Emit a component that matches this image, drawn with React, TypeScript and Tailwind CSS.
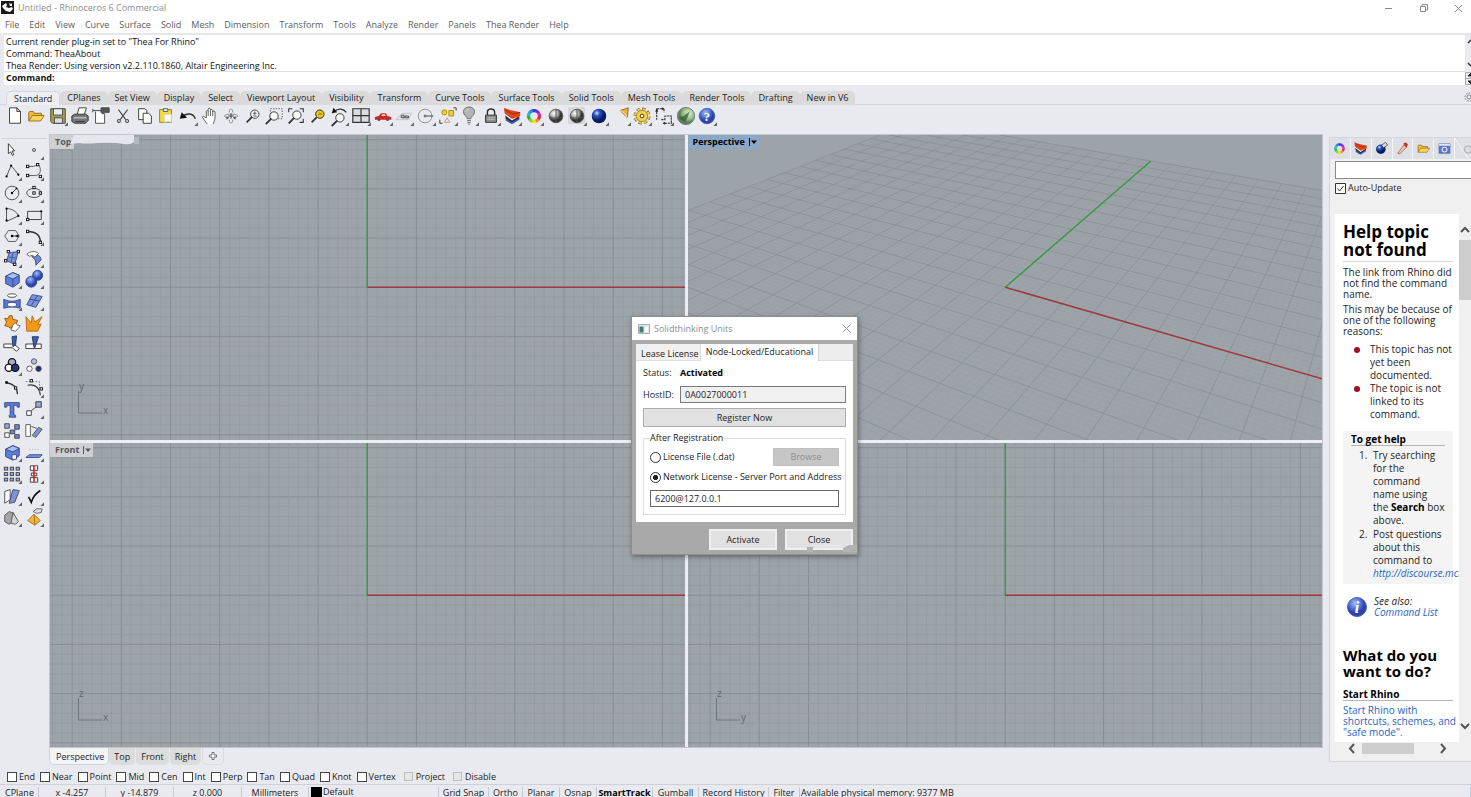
import React, { useState } from 'react';

const MENUS = ['File', 'Edit', 'View', 'Curve', 'Surface', 'Solid', 'Mesh', 'Dimension', 'Transform', 'Tools', 'Analyze', 'Render', 'Panels', 'Thea Render', 'Help'];

const TOOL_TABS = ['Standard', 'CPlanes', 'Set View', 'Display', 'Select', 'Viewport Layout', 'Visibility', 'Transform', 'Curve Tools', 'Surface Tools', 'Solid Tools', 'Mesh Tools', 'Render Tools', 'Drafting', 'New in V6'];

const OSNAPS = ['End', 'Near', 'Point', 'Mid', 'Cen', 'Int', 'Perp', 'Tan', 'Quad', 'Knot', 'Vertex'];

interface Tool {
  name: string;
  art: React.ReactNode;
  more?: boolean;
}

const ColorWheel = ({ r = 5 }: { r?: number }) => (
  <g fill="none" strokeWidth="3.6">
    {['#e8262a', '#f08a1e', '#f6e11c', '#8fd02a', '#27b34a', '#22c4c0', '#2a8be0', '#2b3fd0', '#7a2bd0', '#d02bb8'].map((c, i) => (
      <circle key={c} cx="11" cy="11" r={r} stroke={c} pathLength="10" strokeDasharray="1.1 8.9" strokeDashoffset={-i} />
    ))}
  </g>
);

const Node = ({ x, y }: { x: number; y: number }) => (
  <rect x={x - 1.3} y={y - 1.3} width="2.6" height="2.6" fill="#fff" stroke="#111" strokeWidth="1" />
);

const Shaded = (
  <g>
    <path d="M3 7l8 6 8-4v5l-8 5-7-5z" fill="#2d2d33" />
    <path d="M3 8l8 6 8-5v2l-8 5-8-6z" fill="#f4f4f4" />
    <path d="M2 2l6 2 12 3v4l-8 3-9-6z" fill="#e0451c" />
    <path d="M3 4l9 5 8-2" fill="none" stroke="#8c1c08" strokeWidth=".8" />
    <path d="M4 14l7 4 8-5v2l-8 5-7-4z" fill="#3b55b5" />
  </g>
);

const Magnifier = (
  <g fill="none" stroke="#333">
    <circle cx="13" cy="9" r="4.6" fill="#f7f7fa" />
    <path d="M10 12l-6 6" strokeWidth="2" />
  </g>
);

const Folder = (
  <g stroke="#7a5206" strokeWidth=".8">
    <path d="M3 16V7l1-1h4l1 2h8v3" fill="#f2b93c" />
    <path d="M3 16.500l4-6h13l-4 6z" fill="#fbd65c" />
  </g>
);

const STANDARD: Tool[] = [
  { name: 'New', art: <path d="M5 2h8l4 4v13H5zM13 2v4h4" fill="#fff" stroke="#333" /> },
  { name: 'Open', art: Folder },
  { name: 'Save', more: true, art: <g stroke="#444"><path d="M3 3h16v16H5l-2-2z" fill="#a3a351" /><path d="M6 3h10v7H6z" fill="#eceef5" /><path d="M7 13h9v6H7z" fill="#ddd" /></g> },
  { name: 'Print', art: <g stroke="#333"><path d="M2 11l3-2h12l3 2v5l-3 3H5l-3-2z" fill="#777" /><path d="M8 9l2-7h8l-2 7z" fill="#fff" /><path d="M4 13h14" stroke="#e8e8e8" /><path d="M6 17h10" /></g> },
  { name: 'Document Properties', art: <g stroke="#444" fill="none"><path d="M5 6v13h10V8" fill="#fff" /><path d="M2 5h9" /><path d="M11 2h9v5h-5l-2 2-2-2z" fill="#555" /><path d="M2 3v4" /></g> },
  { name: 'Cut', art: <g stroke="#444" fill="none" strokeWidth="1.200"><path d="M6 4l8 11M16 4L8 15" /><circle cx="6.500" cy="16.500" r="1.600" /><circle cx="15.500" cy="16.500" r="1.600" /></g> },
  { name: 'Copy', art: <g stroke="#333" fill="#fff"><path d="M4 3h7l2 2v10H4z" /><path d="M9 8h6l3 3v8H9z" /></g> },
  { name: 'Paste', art: <g stroke="#8a7a20"><path d="M4 4h13v14H4z" fill="#f5dd3e" /><path d="M8 3h5v3H8z" fill="#eee" stroke="#555" /><path d="M9 9h8v9l-3-1-5 1z" fill="#fffbe0" stroke="#ccc" /></g> },
  { name: 'Undo', more: true, art: <g><path d="M5 12c4-5 12-4 14 2" fill="none" stroke="#333" strokeWidth="1.600" /><path d="M2 14l2-7 6 6z" fill="#111" /></g> },
  { name: 'Pan', art: <path d="M8 20l-5-7c-1-2 1-2 2-1l2 1V6c0-1.500 2-1.500 2 0V3.500c0-1.500 2.500-1.500 2.500 0V5c0-1.500 2.500-1.500 2.500 0v1.500c0-1.500 2.500-1.300 2.500 0V14l-2 6M9 6v5M11.500 5v6M14 6v5" fill="#fff" stroke="#555" /> },
  { name: 'Rotate View', art: <g fill="none" stroke="#888"><path d="M7 13c-5-1-5-4 4-4s9 3 4 4M9 7c0-5 4-5 4 0M9 15c0 5 4 5 4 0" /><path d="M8 11h6M11 8v6" stroke="#333" /><path d="M6 11l3 2-3 2zM16 11v4l-3-2z" fill="#555" stroke="none" /></g> },
  { name: 'Zoom Dynamic', art: <g>{Magnifier}<path d="M11 8h4M13 6v4M11 11h4" stroke="#333" strokeWidth=".8" /></g> },
  { name: 'Zoom Window', art: <g><path d="M7 3h13v11H7z" fill="none" stroke="#555" strokeDasharray="1.500 1.500" /><g transform="translate(-2 2)">{Magnifier}</g></g> },
  { name: 'Zoom Extents', art: <g><g transform="translate(-1 1)">{Magnifier}</g><path d="M3 7V3h4M15 3h4v4M19 14v4h-4" fill="none" stroke="#333" strokeWidth="1.200" /></g> },
  { name: 'Zoom Selected', art: <g>{Magnifier}<circle cx="13" cy="9" r="4.400" fill="#f2ce22" stroke="#6a5a10" /><path d="M11 10l4-2M12 7l3 3" stroke="#8a6d00" /></g> },
  { name: 'Undo View', more: true, art: <g><g transform="translate(-1 4)">{Magnifier}</g><path d="M6 6c4-4 10-3 13 1" fill="none" stroke="#333" strokeWidth="1.400" /><path d="M3 8l2-6 4 5z" fill="#111" /></g> },
  { name: 'Four Viewports', more: true, art: <g stroke="#333" fill="none"><path d="M2 3h18v15H2z" fill="#dcdde2" strokeWidth="1.300" /><path d="M2 10.500h18M11 3v15" strokeWidth="1.300" /></g> },
  { name: 'Car', more: true, art: <g><path d="M2 12l4-1 3-3h5l2 3 4 1v3H2z" fill="#d8261c" /><path d="M9 11l1-2h3l1 2z" fill="#f6d5d2" /><circle cx="6.500" cy="15" r="1.600" fill="#555" /><circle cx="16" cy="15" r="1.600" fill="#555" /></g> },
  { name: 'Construction Plane', more: true, art: <g stroke="#c2c2c6" fill="none"><path d="M2 15l7-7h10l-3 7z" /><path d="M5 12h12M8 10l4 5M13 9l2 6" /><path d="M8 10h3v3H8zM12 11h4v2h-4z" stroke="#444" /></g> },
  { name: 'Radius', more: true, art: <g fill="none" stroke="#888"><circle cx="10" cy="11" r="7.500" /><path d="M10 11h9" stroke="#333" /><path d="M9 10h2v2H9z" fill="#333" /></g> },
  { name: 'Select', more: true, art: <g><circle cx="7" cy="7" r="2.800" fill="#f3cf31" stroke="#a98400" /><path d="M12 5h5v6h-5z" fill="#f3cf31" stroke="#a98400" /><path d="M7 18l3-5 3 5z" fill="none" stroke="#c9928c" /><path d="M17 2h3v3M2 15v4h3" fill="none" stroke="#333" /></g> },
  { name: 'Hide', more: true, art: <g stroke="#666"><path d="M9 14c0-3-4-3-4-8a6 5 0 0112 0c0 5-4 5-4 8z" fill="#b5b5b5" /><path d="M9 16h4M9 18h4M10 20h2" /><path d="M8 6c1-2 3-2 3-2" stroke="#fff" /></g> },
  { name: 'Lock', more: true, art: <g stroke="#333"><path d="M7 10V7c0-5 8-5 8 0v3" fill="none" strokeWidth="1.600" /><path d="M5 10h12v8H5z" fill="#888" /><path d="M7 13h8M7 15h8" stroke="#c5c5c5" /></g> },
  { name: 'Shade', more: true, art: Shaded },
  { name: 'Layers', more: true, art: <ColorWheel r={6} /> },
  { name: 'Render', art: <g><circle cx="11" cy="11" r="7.500" fill="url(#grey)" stroke="#555" /><path d="M4 12c5 2 9 2 14 0M11 4v14" stroke="#555" fill="none" /></g> },
  { name: 'Render Preview', more: true, art: <g><path d="M2 2h17v17H2z" fill="#dcdce0" stroke="#ccc" /><circle cx="11" cy="11" r="7.500" fill="url(#grey)" stroke="#555" /><path d="M4 12c5 2 9 2 14 0M11 4v14" stroke="#555" fill="none" /></g> },
  { name: 'Environment', more: true, art: <circle cx="11" cy="11" r="8" fill="url(#navy)" /> },
  { name: 'Spotlight', more: true, art: <g><path d="M10 5l9-3-1 11z" fill="#f0b03a" stroke="#6a5430" strokeWidth=".8" /><path d="M10 5c3 1 6 4 8 8" stroke="#fff2a0" fill="none" /></g> },
  { name: 'Options', more: true, art: <g><circle cx="11" cy="11" r="7.500" fill="none" stroke="#6a5a20" strokeWidth="3.600" strokeDasharray="3.600 2.300" /><circle cx="11" cy="11" r="7.200" fill="none" stroke="#f1cf52" strokeWidth="3" strokeDasharray="3 2.650" /><circle cx="11" cy="11" r="6.200" fill="#f1cf52" stroke="#6a5a20" strokeWidth=".6" /><circle cx="11" cy="11" r="2" fill="#fff" stroke="#3a3010" /></g> },
  { name: 'Dimension', more: true, art: <g stroke="#333" fill="none"><path d="M3 3v12M3 3h8M11 3v4M8 15h4v-4h7v8M12 19h8" strokeDasharray="2.500 .8" strokeWidth="1.200" /><path d="M2 6l1-3 1 3zM9 2l2 1-2 1zM12 18v2l-2-1z" fill="#111" /></g> },
  { name: 'Thea', art: <g><circle cx="11" cy="11" r="9.500" fill="url(#green)" stroke="#777" /><path d="M3 13l5-2 7-5-2 6-3 6z" fill="#3c5b38" opacity=".75" /></g> },
  { name: 'Help Topics', more: true, art: <g><circle cx="11" cy="11" r="8.500" fill="url(#blue)" stroke="#4a60b8" /><text x="11" y="16" textAnchor="middle" fontSize="14" fontWeight="bold" fontFamily="Liberation Serif, serif" fill="#fff">?</text></g> },
];

const box = 'M4 8l8-4 7 3v8l-7 5-8-4z';

const SIDE: Tool[] = [
  { name: 'Pointer', art: <path d="M7 4l7 8h-3l2 4-1.500 1-2-4L7 15z" fill="#fff" stroke="#333" /> },
  { name: 'Point', more: true, art: <circle cx="11" cy="11" r="1.600" fill="#fff" stroke="#333" /> },
  { name: 'Polyline', more: true, art: <g><path d="M5 17l5-12 8 10" fill="none" stroke="#444" /><circle cx="5" cy="17" r="1.200" /><circle cx="10" cy="5" r="1.200" /><circle cx="18" cy="15" r="1.200" /></g> },
  { name: 'Curve', more: true, art: <g><path d="M4 16h9c6-1 6-8 3-12M4 6h6l6-2" fill="none" stroke="#555" /><Node x={4} y={6} /><Node x={15} y={4} /><Node x={4} y={16} /><Node x={18} y={17} /></g> },
  { name: 'Circle', more: true, art: <g><circle cx="11" cy="11" r="7.500" fill="none" stroke="#444" /><path d="M11 11l5-5" stroke="#333" /><circle cx="11" cy="11" r="1.300" /><circle cx="16" cy="6" r="1" /></g> },
  { name: 'Ellipse', more: true, art: <g><ellipse cx="11" cy="11" rx="8" ry="5" fill="none" stroke="#444" /><Node x={11} y={5} /><Node x={11} y={11} /><Node x={18} y={11} /></g> },
  { name: 'Arc', more: true, art: <g><path d="M5 18V4c6 0 11 3 13 8z" fill="none" stroke="#444" /><circle cx="5" cy="17" r="1.200" /><circle cx="5" cy="4" r="1.200" /><circle cx="18" cy="12" r="1.200" /></g> },
  { name: 'Rectangle', more: true, art: <g><path d="M4 7h15v9H4z" fill="none" stroke="#333" /><Node x={4} y={16} /><circle cx="19" cy="7" r="1.200" /></g> },
  { name: 'Polygon', more: true, art: <g><path d="M7 5h8l4 6-4 6H7l-4-6z" fill="none" stroke="#555" /><path d="M11 11h7" stroke="#111" /><circle cx="11" cy="11" r="1.300" /><circle cx="17" cy="11" r="1.300" /></g> },
  { name: 'Fillet', more: true, art: <g><path d="M4 6c9 0 14 3 14 12" fill="none" stroke="#333" strokeWidth="1.600" /><Node x={4} y={6} /><Node x={18} y={18} /></g> },
  { name: 'Surface from Points', more: true, art: <g><path d="M8 5l10-1-4 14-9-4z" fill="#7b94d8" stroke="#3a4c94" /><path d="M12 5l-2 11M7 10l9 1" stroke="#44589c" /><Node x={7} y={4} /><Node x={18} y={4} /><Node x={4} y={14} /><Node x={14} y={18} /></g> },
  { name: 'Loft', more: true, art: <g strokeWidth=".8"><path d="M9 7c5-1 9 1 10 6l-6 6c0-5-1-8-4-9z" fill="#6b88d4" stroke="#334" /><path d="M3 7c4-4 10-4 13-1l-4 4c-2-2-4-2-6-1z" fill="#fff" stroke="#444" /></g> },
  { name: 'Box', more: true, art: <g stroke="#34488c"><path d={box} fill="#5c7ed6" /><path d="M4 8l8-4 7 3-7 4z" fill="#a9bdf0" /><path d="M12 11v9" /></g> },
  { name: 'Boolean Union', more: true, art: <g><circle cx="15" cy="7" r="5.500" fill="url(#blue)" stroke="#34488c" /><circle cx="8" cy="14" r="6" fill="url(#blue)" stroke="#34488c" /></g> },
  { name: 'Project', more: true, art: <g stroke="#34488c"><path d="M2 9c6 3 12 3 18 0v10c-6-2-12-2-18 0z" fill="#5576cc" /><ellipse cx="11" cy="15" rx="5" ry="2.500" fill="#fff" /><ellipse cx="11" cy="5" rx="5" ry="2" fill="#fff" stroke="#444" /></g> },
  { name: 'Mesh', more: true, art: <g stroke="#34488c"><path d="M9 4l11 2-7 12-10-3z" fill="#7b94d8" /><path d="M15 5L8 16M6 9l11 2" /></g> },
  { name: 'Join', art: <g><path d="M3 6l4 0 1-3 3 0 1 4 5 1-1 4-4 1-2 4-3-2-4-1 2-4z" fill="#f39a1c" stroke="#8a5300" /><path d="M12 13l3-2 2 2 3 1-2 3-3 3-5-1z" fill="#fff" stroke="#666" /></g> },
  { name: 'Explode', art: <path d="M2 4l6 7 1-8 3 7 8-6-5 9 4-1-4 8H3z" fill="#f39a1c" stroke="#a85a00" strokeWidth=".8" /> },
  { name: 'Trim', art: <g><path d="M2 11h11l6 5-3 3-5-4H2z" fill="#fff" stroke="#333" /><path d="M11 3l5-1-1 10-3 2z" fill="#3c5fa8" stroke="#24386c" /></g> },
  { name: 'Split', art: <g><path d="M2 11h17v5H2z" fill="#fff" stroke="#333" /><path d="M9 3h7l-4 12h-1z" fill="#3c5fa8" stroke="#24386c" /></g> },
  { name: 'Group', more: true, art: <g stroke="#111" strokeWidth="1.400"><circle cx="11" cy="7" r="4" fill="#a9b0c8" /><circle cx="7.500" cy="13" r="4" fill="#fff" /><circle cx="14.500" cy="13" r="4" fill="#2a3578" /></g> },
  { name: 'Ungroup', art: <g stroke="#555"><circle cx="11" cy="6" r="3" fill="#b7b9e8" /><circle cx="6" cy="14" r="3" fill="#fff" /><circle cx="16" cy="14" r="3" fill="#1f2c78" /></g> },
  { name: 'Edit Points', art: <g><path d="M4 5c8 1 13 5 13 13" fill="none" stroke="#333" strokeWidth="1.300" /><circle cx="5" cy="5" r="1.600" fill="#111" /><Node x={15} y={11} /></g> },
  { name: 'Control Points', more: true, art: <g><path d="M4 8c7-2 13 2 14 11" fill="none" stroke="#333" strokeWidth="1.300" /><path d="M2 4h15v12" fill="none" stroke="#777" strokeDasharray="2 1.500" /><Node x={8} y={3} /><Node x={19} y={12} /></g> },
  { name: 'Text', art: <path d="M3 4h16v5h-2l-1-2h-3v10l2 1v2H8v-2l1-1V7H6L5 9H3z" fill="#5c7ed6" stroke="#34488c" /> },
  { name: 'Move', more: true, art: <g stroke="#333"><path d="M3 13h5v5H3z" fill="#fff" /><path d="M13 3h6v6h-6z" fill="#9aabdf" /><path d="M8 13l5-4" /></g> },
  { name: 'Array', art: <g stroke="#333" strokeWidth=".9"><path d="M3 3h5v5H3z" fill="#9aabdf" /><path d="M14 4h5v5h-5zM9 10h5v4H9zM14 15h5v4h-5z" fill="#6f88d4" /><path d="M3 13h5v5H3z" fill="#fff" /></g> },
  { name: 'Copy Object', art: <g stroke="#555"><path d="M2 4h5v13H2z" fill="#fff" /><path d="M9 16l7-9 4 2-7 9z" fill="#7b94d8" /><path d="M8 6l6 2" /></g> },
  { name: 'Cap', more: true, art: <g stroke="#34488c"><path d={box} fill="#5c7ed6" /><path d="M4 8l8-4 7 3-7 4z" fill="#a9bdf0" /><path d="M11 14h5v5h-5z" fill="#fff" /></g> },
  { name: 'Set Points', more: true, art: <g stroke="#34488c"><path d="M2 17l4-3h14l-3 3z" fill="#7b94d8" /><path d="M6 8h11" stroke="#aaa" strokeDasharray="1 2" /></g> },
  { name: 'Rectangular Array', more: true, art: <g stroke="#333" strokeWidth=".9" fill="#9aabdf">{[3.5, 9.5, 15.5].map(y => [2.5, 9, 15.5].map(x => <rect key={`${x}-${y}`} x={x} y={y} width="3.800" height="3.200" />))}</g> },
  { name: 'Align', more: true, art: <g stroke="#333"><path d="M7 2h8v5H7zM8 10h6v3H8zM7 15h8v5H7z" fill="#fff" /><path d="M11 2v18" stroke="#d22" strokeWidth="1.800" /></g> },
  { name: 'Shear', more: true, art: <g stroke="#445"><path d="M3 6l6-2v11l-6 4z" fill="#fff" /><path d="M12 4l7 1-5 13-6 1z" fill="#7b94d8" /></g> },
  { name: 'Check', more: true, art: <path d="M5 12l3 6c2-7 5-10 10-13" fill="none" stroke="#111" strokeWidth="1.800" /> },
  { name: 'Solid Tools', more: true, art: <g stroke="#555"><path d="M3 9l5-4 5 2v8l-5 4-5-3z" fill="#a5a5a8" /><path d="M12 6l6 10-3 3-5-1z" fill="#d5d5d8" /></g> },
  { name: 'Analyze', more: true, art: <g stroke="#8a6310" strokeWidth=".8"><path d="M4 15l7-7 7 7-6 5z" fill="#f0b43c" /><path d="M11 8l1 12" /><path d="M10 5l4-3h6l-1 4-5 1z" fill="#ddd" stroke="#444" /></g> },
];

const ToolButton = ({ tool }: { tool: Tool }) => (
  <button aria-label={tool.name} className="flex items-center justify-center min-w-0">
    <svg viewBox="0 0 22 22" className="size-[20px] shrink-0 overflow-visible">
      {tool.art}
      {tool.more && <path d="M22 18v4h-4z" fill="#666" />}
    </svg>
  </button>
);

const STEP = 49.3;

// Flat grid for the parallel views, with the axes starting in the middle
const OrthoGrid = () => {
  const lines: React.ReactNode[] = [];
  for (let i = -70; i <= 70; i++) {
    const d = (i * STEP) / 5;
    const color = i % 5 === 0 ? '#828a91' : '#939a9f';
    lines.push(<path key={i} d={`M${318 + d} -500v1400M-500 ${153 + d}h1700`} stroke={color} strokeWidth=".8" />);
  }
  return (
    <svg viewBox="0 0 636 306" preserveAspectRatio="xMidYMid slice" className="absolute inset-0 size-full">
      {lines}
      <path d="M318 153V-500" stroke="#3c9a44" strokeWidth="1.500" />
      <path d="M318 153H1300" stroke="#a03a3c" strokeWidth="1.500" />
    </svg>
  );
};

const project = (u: number, v: number) => {
  const w = 1 - 0.294 * u + 0.519 * v;
  return `${(1005 + 87.6 * u + 743.4 * v) / w} ${(287 + 26.3 * u - 43.2 * v) / w}`;
};

const PerspectiveGrid = () => {
  const lines: React.ReactNode[] = [];
  for (let i = -70; i <= 70; i++) {
    const t = i / 70;
    const major = i % 5 === 0;
    lines.push(
      <path
        key={i}
        d={`M${project(t, -1)}L${project(t, 1)}M${project(-1, t)}L${project(1, t)}`}
        stroke={major ? '#868e94' : '#979ea3'}
        strokeWidth={major ? 0.8 : 0.5}
      />
    );
  }
  return (
    <svg viewBox="687 134 636 306" preserveAspectRatio="xMidYMid slice" className="absolute inset-0 size-full" fill="none">
      {lines}
      <path d={`M${project(0, 0)}L${project(0, 1)}`} stroke="#3c9a44" strokeWidth="1.500" />
      <path d={`M${project(0, 0)}L${project(1, 0)}`} stroke="#a03a3c" strokeWidth="1.500" />
    </svg>
  );
};

const AxisMark = ({ up, across }: { up: string; across: string }) => (
  <svg viewBox="0 0 36 40" className="absolute left-[26px] bottom-[22px] w-9 h-10" fontFamily="Open Sans, sans-serif" fontSize="10" fill="#5f676e">
    <path d="M2.500 13v22H26" fill="none" stroke="#6d757c" />
    <text x="3" y="12">{up}</text>
    <text x="27" y="36">{across}</text>
  </svg>
);

const ViewportLabel = ({ name, active }: { name: string; active?: boolean }) => (
  <div className={`absolute left-0 top-0 h-[14px] flex items-center gap-1 pl-[5px] pr-[2px] font-bold ${active ? 'bg-[#8ba8c7] text-black' : 'bg-[#ced0d4] text-[#55585c]'}`}>
    {name}
    <button aria-label={`${name} viewport menu`} className="border-l border-current pl-px">
      <svg viewBox="0 0 6 8" className="w-[6px] h-[8px]" fill="currentColor"><path d="M0 2.500h6L3 6z" /></svg>
    </button>
  </div>
);

const Dialog = () => {
  const [source, setSource] = useState('network');
  const [server, setServer] = useState('6200@127.0.0.1');

  return (
    <div role="dialog" aria-label="Solidthinking Units" className="absolute left-[631px] top-[316px] w-[227px] bg-[#a9a9a9] border border-[#8c8f92] shadow-[1px_2px_5px_rgba(0,0,0,0.35)] text-[9px] leading-3 text-[#1c1c1c]">
      <div className="h-[23px] bg-white flex items-center px-[6px] text-[#8d8d8d]">
        <svg viewBox="0 0 12 10" className="w-[12px] h-[10px] mr-[4px]">
          <path d="M.5.500h11v9H.500z" fill="#e4e8e8" stroke="#aab" />
          <path d="M1.500 2.500h4v6h-4z" fill="#3a8078" />
          <path d="M7 3h3v5H7z" fill="#fff" />
        </svg>
        <span className="flex-1">Solidthinking Units</span>
        <button aria-label="Close dialog">
          <svg viewBox="0 0 9 9" className="size-[9px]" stroke="#999" fill="none"><path d="M.5.500l8 8M8.500.500l-8 8" /></svg>
        </button>
      </div>
      <div className="mt-[4px] mx-[4px] bg-white pb-[7px]">
        <div className="h-[17px] flex bg-[#ededed] border-b border-[#dedede]">
          <button className="pl-[5px] pr-px pt-[3px] bg-[#f0f0f0] border-r border-[#dcdcdc] whitespace-nowrap">Lease License</button>
          <button className="px-[5px] h-[17px] pb-px bg-white border-r border-[#d0d0d0] whitespace-nowrap">Node-Locked/Educational</button>
        </div>
        <div className="px-[7px] pt-[6px]">
          <div className="flex items-center">
            <span className="w-[37px]">Status:</span>
            <span className="font-bold text-black">Activated</span>
          </div>
          <div className="flex items-center mt-[7px]">
            <label htmlFor="host" className="w-[37px]">HostID:</label>
            <input id="host" readOnly value="0A0027000011" className="flex-1 min-w-0 h-[17px] px-[4px] bg-[#f0f0f0] border border-[#7a7a7a]" />
          </div>
          <button className="mt-[5px] block w-full h-[19px] bg-[#e1e1e1] border border-[#adadad]">Register Now</button>
          <fieldset className="mt-[5px] border border-[#dcdcdc] px-[6px] pb-[7px] min-w-0">
            <legend className="leading-3">After Registration</legend>
            <div className="flex items-center justify-between mt-[4px]">
              <label className="flex items-center gap-[2px]">
                <input type="radio" name="source" checked={source === 'file'} onChange={() => setSource('file')} className="appearance-none size-[11px] rounded-full border border-[#333] bg-white checked:bg-[radial-gradient(circle,#222_35%,#fff_45%)]" />
                License File (.dat)
              </label>
              <button disabled className="w-[66px] h-[18px] bg-[#c6c6c6] border border-[#bfbfbf] text-[#8f8f8f]">Browse</button>
            </div>
            <label className="flex items-center gap-[2px] mt-[5px] whitespace-nowrap">
              <input type="radio" name="source" checked={source === 'network'} onChange={() => setSource('network')} className="appearance-none size-[11px] shrink-0 rounded-full border border-[#333] bg-white checked:bg-[radial-gradient(circle,#222_35%,#fff_45%)]" />
              Network License - Server Port and Address
            </label>
            <input aria-label="Server port and address" value={server} onChange={e => setServer(e.target.value)} className="block w-full mt-[7px] h-[17px] px-[4px] bg-white border border-[#666]" />
          </fieldset>
        </div>
      </div>
      <div className="flex justify-end gap-2 pt-[7px] pb-[4px] pr-[4px]">
        <button className="w-[68px] h-[21px] bg-[#e1e1e1] border-2 border-[#efefef]">Activate</button>
        <button className="w-[68px] h-[21px] bg-[#e1e1e1] border-2 border-[#efefef]">Close</button>
      </div>
      <svg viewBox="0 0 50 12" className="absolute right-0 bottom-0 w-[50px] h-[12px]">
        <path d="M0 5h6v5H0zM36 6l6-3h8v7H36z" fill="#b2b2b2" />
        <path d="M8 4q14-3 26-1v2H8z" fill="#e6e6e6" />
      </svg>
    </div>
  );
};

const PANEL_TABS: Tool[] = [
  { name: 'Layers panel', art: <ColorWheel r={6} /> },
  { name: 'Display panel', art: Shaded },
  { name: 'Properties panel', art: <g><circle cx="10" cy="12" r="7" fill="url(#navy)" /><path d="M11 6l6-4 3 4-6 4z" fill="#ddd" stroke="#333" /></g> },
  { name: 'Materials panel', art: <g><path d="M4 18l9-12 4 3-10 10z" fill="#f0c4b0" stroke="#7a5a4a" /><path d="M12 4l4-2 3 3-2 5z" fill="#c9351e" /></g> },
  { name: 'Libraries panel', art: Folder },
  { name: 'Help panel', art: <g><path d="M3 4h16v14H3z" fill="#5a78d0" stroke="#4a60a8" /><path d="M3 4h16v3H3z" fill="#dfe5f5" /><circle cx="11" cy="12.500" r="3.500" fill="none" stroke="#e8edfa" strokeWidth="1.500" /></g> },
];

const HelpPanel = () => {
  const [auto, setAuto] = useState(true);

  return (
    <aside className="w-[142px] shrink-0 pt-[3px] bg-[#e9eaf0] flex flex-col overflow-hidden">
      <div className="flex-1 min-h-0 flex flex-col bg-[#f0f0f1] border border-r-0 border-[#d3d5dd]">
        <div className="flex h-[21px] bg-[#dfe0e6]">
          {PANEL_TABS.map(tool => (
            <button key={tool.name} aria-label={tool.name} className="w-[21px] flex items-center justify-center border-r border-[#f5f5f8] last:bg-[#f0f0f1]">
              <svg viewBox="0 0 22 22" className="size-[15px]">{tool.art}</svg>
            </button>
          ))}
          <svg viewBox="0 0 16 20" className="w-[16px] h-full" fill="none">
            <path d="M0 0l13 20" stroke="#f5f5f8" />
            <circle cx="13" cy="11" r="3.500" stroke="#bbb" strokeWidth="1.500" />
          </svg>
        </div>
        <input aria-label="Search help" className="h-[18px] ml-[5px] mt-[2px] bg-white border border-r-0 border-[#8a8a8a] px-1" />
        <label className="flex items-center gap-[2px] ml-[5px] mt-[3px] h-3">
          <input type="checkbox" checked={auto} onChange={e => setAuto(e.target.checked)} className="peer sr-only" />
          <svg viewBox="0 0 11 11" className="size-[11px]" fill="none" stroke="#333">
            <path d="M.5.500h10v10H.500z" fill="#fff" />
            {auto && <path d="M2.500 5.500l2 2.500 4-5" />}
          </svg>
          Auto-Update
        </label>
        <div className="flex flex-1 min-h-0 mt-[20px]">
          <div className="flex-1 min-w-0 ml-[5px] bg-white pl-2 pr-[6px] pt-[9px] text-[10px] leading-[11px] text-[#1e1e1e] overflow-hidden">
            <h1 className="text-[17px] leading-[18px] font-bold text-black pb-[2px] border-b border-[#d8d8d8]">Help topic not found</h1>
            <p className="mt-[5px]">The link from Rhino did not find the command name.</p>
            <p className="mt-[4px]">This may be because of one of the following reasons:</p>
            <ul className="mt-[6px] leading-[13px]">
              {['This topic has not yet been documented.', 'The topic is not linked to its command.'].map(t => (
                <li key={t} className="flex">
                  <span className="w-[27px] shrink-0 flex justify-center pt-[4px]"><i className="size-[6px] rounded-full bg-[#9c1022]" /></span>
                  <span>{t}</span>
                </li>
              ))}
            </ul>
            <div className="mt-[10px] bg-[#f4f4f4] px-2 pt-[2px] pb-[4px]">
              <h2 className="font-bold leading-3 text-black border-b border-[#b5b5b5]">To get help</h2>
              <ol className="mt-[3px] leading-[13px]">
                <li className="flex"><span className="w-[22px] shrink-0 pl-2">1.</span><span className="min-w-0">Try searching for the command name using the <b className="text-black">Search</b> box above.</span></li>
                <li className="flex mt-px"><span className="w-[22px] shrink-0 pl-2">2.</span><span className="min-w-0">Post questions about this command to <a href="#discourse" className="italic text-[#1f66c8]">http://discourse.mcneel.com</a></span></li>
              </ol>
            </div>
            <div className="flex items-center mt-[12px] italic">
              <svg viewBox="0 0 22 22" className="size-[22px] ml-[3px] mr-[6px]">
                <circle cx="11" cy="11" r="9.500" fill="url(#blue)" stroke="#4a60b8" />
                <text x="11" y="17" textAnchor="middle" fontSize="16" fontWeight="bold" fontStyle="italic" fontFamily="Liberation Serif, serif" fill="#fff">i</text>
              </svg>
              <span>See also:<br /><a href="#commands" className="text-[#1f66c8]">Command List</a></span>
            </div>
            <h1 className="mt-[29px] text-[15px] leading-4 font-bold text-black">What do you want to do?</h1>
            <h2 className="mt-[9px] font-bold leading-3 text-black border-b border-[#b5b5b5]">Start Rhino</h2>
            <p className="mt-[4px] -mr-[5px]"><a href="#start" className="text-[#1f66c8]">Start Rhino with<br />shortcuts, schemes, and<br />"safe mode".</a></p>
          </div>
          <div className="w-[12px] flex flex-col items-center pt-[12px] pb-[12px] overflow-hidden">
            <svg viewBox="0 0 10 8" className="w-[10px] h-2" fill="none" stroke="#555" strokeWidth="2"><path d="M1 6l4-4 4 4" /></svg>
            <div className="mt-[6px] w-full h-[60px] bg-[#cdcdcd]" />
            <svg viewBox="0 0 10 8" className="w-[10px] h-2 mt-auto" fill="none" stroke="#555" strokeWidth="2"><path d="M1 2l4 4 4-4" /></svg>
          </div>
        </div>
        <div className="h-[19px] shrink-0 flex items-start pt-px pl-[18px] pr-[24px]">
          <svg viewBox="0 0 8 11" className="w-2 h-[11px]" fill="none" stroke="#555" strokeWidth="2"><path d="M6 1L2 5.500 6 10" /></svg>
          <div className="ml-[6px] w-[52px] h-[11px] bg-[#cdcdcd]" />
          <svg viewBox="0 0 8 11" className="w-2 h-[11px] ml-auto" fill="none" stroke="#555" strokeWidth="2"><path d="M2 1l4 4.500L2 10" /></svg>
        </div>
      </div>
      <div className="h-[4px] shrink-0" />
    </aside>
  );
};

const STATUS_TOGGLES = [
  { name: 'Grid Snap', width: 'w-[50px]' },
  { name: 'Ortho', width: 'w-[34px]' },
  { name: 'Planar', width: 'w-[37px]' },
  { name: 'Osnap', width: 'w-[37px]' },
  { name: 'SmartTrack', width: 'w-[56px]', on: true },
  { name: 'Gumball', width: 'w-[46px]' },
  { name: 'Record History', width: 'w-[70px]' },
  { name: 'Filter', width: 'w-[31px]' },
];

const App: React.FC = () => {
  const [toolTab, setToolTab] = useState('Standard');

  return (
    <div className="relative h-screen flex flex-col overflow-hidden bg-[#e9eaf0] text-[9px] leading-3 text-[#222] font-['Open_Sans','Noto_Sans',sans-serif]">
      <svg className="absolute size-0" aria-hidden="true">
        <defs>
          <radialGradient id="grey" cx=".35" cy=".3"><stop offset="0" stopColor="#fff" /><stop offset=".6" stopColor="#a5a5a5" /><stop offset="1" stopColor="#333" /></radialGradient>
          <radialGradient id="navy" cx=".35" cy=".3"><stop offset="0" stopColor="#cfe0ff" /><stop offset=".4" stopColor="#2b55c0" /><stop offset="1" stopColor="#081c60" /></radialGradient>
          <radialGradient id="blue" cx=".4" cy=".3"><stop offset="0" stopColor="#a9bdf5" /><stop offset=".6" stopColor="#5474d8" /><stop offset="1" stopColor="#2c42a8" /></radialGradient>
          <radialGradient id="green" cx=".65" cy=".35"><stop offset="0" stopColor="#dff0d4" /><stop offset=".7" stopColor="#8fbc84" /><stop offset="1" stopColor="#5f8058" /></radialGradient>
        </defs>
      </svg>

      {/* Title bar */}
      <header className="bg-white">
        <div className="h-[16px] flex items-center text-[#8f8f8f]">
          <svg viewBox="0 0 14 14" className="size-[14px] ml-px mr-[3px]">
            <path d="M0 0h13v13H0z" fill="#1a1a1a" />
            <path d="M1 5l4-3 1 2-1 2 3 1 3-1 1 2-3 3-4-1-3-3zM8 2l2 1 1-1v3l-2 0z" fill="#fff" />
          </svg>
          <span className="flex-1">Untitled - Rhinoceros 6 Commercial</span>
          <div className="flex items-center gap-[26px] pr-[8px]">
            <button aria-label="Minimize"><svg viewBox="0 0 9 9" className="size-[9px]" stroke="#888"><path d="M1 4.500h7" /></svg></button>
            <button aria-label="Restore"><svg viewBox="0 0 9 9" className="size-[9px]" stroke="#888" fill="none"><path d="M1.500 2.500h5v5h-5zM3 2V.500h5.500V6H7" /></svg></button>
            <button aria-label="Close"><svg viewBox="0 0 9 9" className="size-[9px]" stroke="#888"><path d="M1 1l7 7M8 1L1 8" /></svg></button>
          </div>
        </div>
        <nav className="h-[17px] flex items-center gap-[10px] pl-[5px] text-[#5c5c5c]">
          {MENUS.map(m => <button key={m}>{m}</button>)}
        </nav>
      </header>

      {/* Command history and prompt */}
      <section className="ml-[4px] flex border-t-2 border-[#e6e6ea] bg-white text-[#111]">
        <div className="flex-1">
          <div className="px-[2px] pt-px h-[36px]">
            <p>Current render plug-in set to "Thea For Rhino"</p>
            <p>Command: TheaAbout</p>
            <p>Thea Render: Using version v2.2.110.1860, Altair Engineering Inc.</p>
          </div>
          <label className="flex items-center h-[14px] pb-px px-[2px] border-t border-[#dfdfe4] font-bold">
            Command:
            <input className="flex-1 ml-1 outline-none font-normal" />
          </label>
        </div>
        <svg viewBox="0 0 6 50" className="w-[6px] h-[50px] bg-[#ececf0]" fill="none" stroke="#333">
          <path d="M3 8l3-3M3 28l3 3" strokeWidth="1.500" />
          <path d="M.5 37.500h6v12h-6zM0 43.500h6" stroke="#aaa" />
          <path d="M3 41l3-3v3zM3 46l3 3v-3z" fill="#111" />
        </svg>
      </section>

      {/* Toolbar tabs */}
      <div className="mt-[6px] flex h-[14px] pl-[6px] border-b border-[#d4d6de]">
        {TOOL_TABS.map(t => (
          <button
            key={t}
            onClick={() => setToolTab(t)}
            className={`px-[7px] rounded-t-[5px] h-[14px] ${t === toolTab ? 'bg-[#eeeff4] border border-b-0 border-[#d4d6de]' : 'bg-[#dadada]'}`}
          >
            {t}
          </button>
        ))}
        <svg viewBox="0 0 8 12" className="w-[8px] h-3 ml-auto" fill="none" stroke="#888"><circle cx="6" cy="6" r="4" strokeDasharray="2 1" /><circle cx="6" cy="6" r="2" /></svg>
      </div>
      <div className="h-[29px] pl-[4px]">
        <div className="grid grid-cols-[repeat(33,minmax(0,1fr))] w-[714px] pt-px">
          {STANDARD.map(tool => <ToolButton key={tool.name} tool={tool} />)}
        </div>
      </div>

      <div className="flex-1 min-h-0 flex">
        <div className="w-[49px] shrink-0 pt-[4px]">
          <div className="mx-[2px] border-t border-[#d0d2da]" />
          <div className="grid grid-cols-2 grid-rows-[repeat(18,minmax(0,1fr))] w-[44px] h-[389px] ml-px">
            {SIDE.map(tool => <ToolButton key={tool.name} tool={tool} />)}
          </div>
        </div>

        <div className="flex-1 min-w-0 flex flex-col">
          <main className="flex-1 min-h-0 grid grid-cols-2 grid-rows-2 gap-[3px] bg-[#eceef3] border border-[#c3c7cd]">
            <section className="relative overflow-hidden bg-[#9da4a9]">
              <OrthoGrid />
              <ViewportLabel name="Top" />
              <svg viewBox="0 0 90 14" className="absolute left-0 top-0 w-[90px] h-[14px]">
                <path d="M24 8h14v6H24z" fill="#9da4a9" />
                <path d="M24 0h60v7q-3 3-10 2-12-2-26-1-14 1-18 0l-10 1 2-4z" fill="#e6e7ed" />
                <path d="M84 2h5v7h-5z" fill="#b4b8bd" />
              </svg>
              <AxisMark up="y" across="x" />
            </section>
            <section className="relative overflow-hidden bg-[#9da4a9]">
              <PerspectiveGrid />
              <ViewportLabel name="Perspective" active />
            </section>
            <section className="relative overflow-hidden bg-[#9da4a9]">
              <OrthoGrid />
              <ViewportLabel name="Front" />
              <AxisMark up="z" across="x" />
            </section>
            <section className="relative overflow-hidden bg-[#9da4a9]">
              <OrthoGrid />
              <AxisMark up="z" across="y" />
            </section>
          </main>
          <div className="h-[18px] shrink-0 flex items-start">
            <button className="h-[17px] pl-[6px] pr-[4px] pt-px bg-[#f3f4f8] border border-t-0 border-[#d0d2da] rounded-b-[5px]">Perspective</button>
            {['Top', 'Front', 'Right'].map(v => (
              <button key={v} className="h-[17px] px-[5px] pt-px bg-[#dcdcdc] border-r border-[#ececf0] rounded-b-[5px]">{v}</button>
            ))}
            <button aria-label="New layout" className="h-[17px] px-[6px] border border-t-0 border-[#d8dae0] rounded-b-[5px]">
              <svg viewBox="0 0 8 8" className="size-2" fill="#fff" stroke="#555" strokeWidth=".8"><path d="M3 .5h2V3h2.500v2H5v2.500H3V5H.500V3H3z" /></svg>
            </button>
          </div>
        </div>

        <div className="w-[6px] shrink-0" />
        <HelpPanel />
      </div>

      {/* Object snaps */}
      <div className="h-[18px] shrink-0 flex items-center gap-[5px] pt-[3px] pl-[7px]">
        {OSNAPS.map(s => (
          <label key={s} className="flex items-center gap-[2px]">
            <input type="checkbox" className="appearance-none size-[10px] bg-white border border-[#444] checked:bg-[#444]" />
            {s}
          </label>
        ))}
        {['Project', 'Disable'].map(s => (
          <label key={s} className="flex items-center gap-[3px] ml-[3px]">
            <input type="checkbox" disabled className="appearance-none size-[9px] bg-[#e6e6e6] border border-[#bcbcbc]" />
            {s}
          </label>
        ))}
      </div>

      {/* Status bar */}
      <footer className="h-[13px] shrink-0 flex border-t border-[#cfd1d8] pt-[2px] whitespace-nowrap *:border-r *:border-[#c4cad6] *:shrink-0">
        <span className="w-[39px] pl-[5px]">CPlane</span>
        <span className="w-[67px] text-center">x -4.257</span>
        <span className="w-[68px] text-center">y -14.879</span>
        <span className="w-[68px] text-center">z 0.000</span>
        <span className="w-[67px] text-center">Millimeters</span>
        <span className="w-[130px] flex items-center pl-[2px]"><i className="size-[11px] bg-black mr-px" />Default</span>
        {STATUS_TOGGLES.map(s => (
          <button key={s.name} className={`${s.width} ${s.on ? 'font-bold text-black' : ''}`}>{s.name}</button>
        ))}
        <span className="flex-1 pl-px">Available physical memory: 9377 MB</span>
      </footer>

      <Dialog />
    </div>
  );
};

export default App;
